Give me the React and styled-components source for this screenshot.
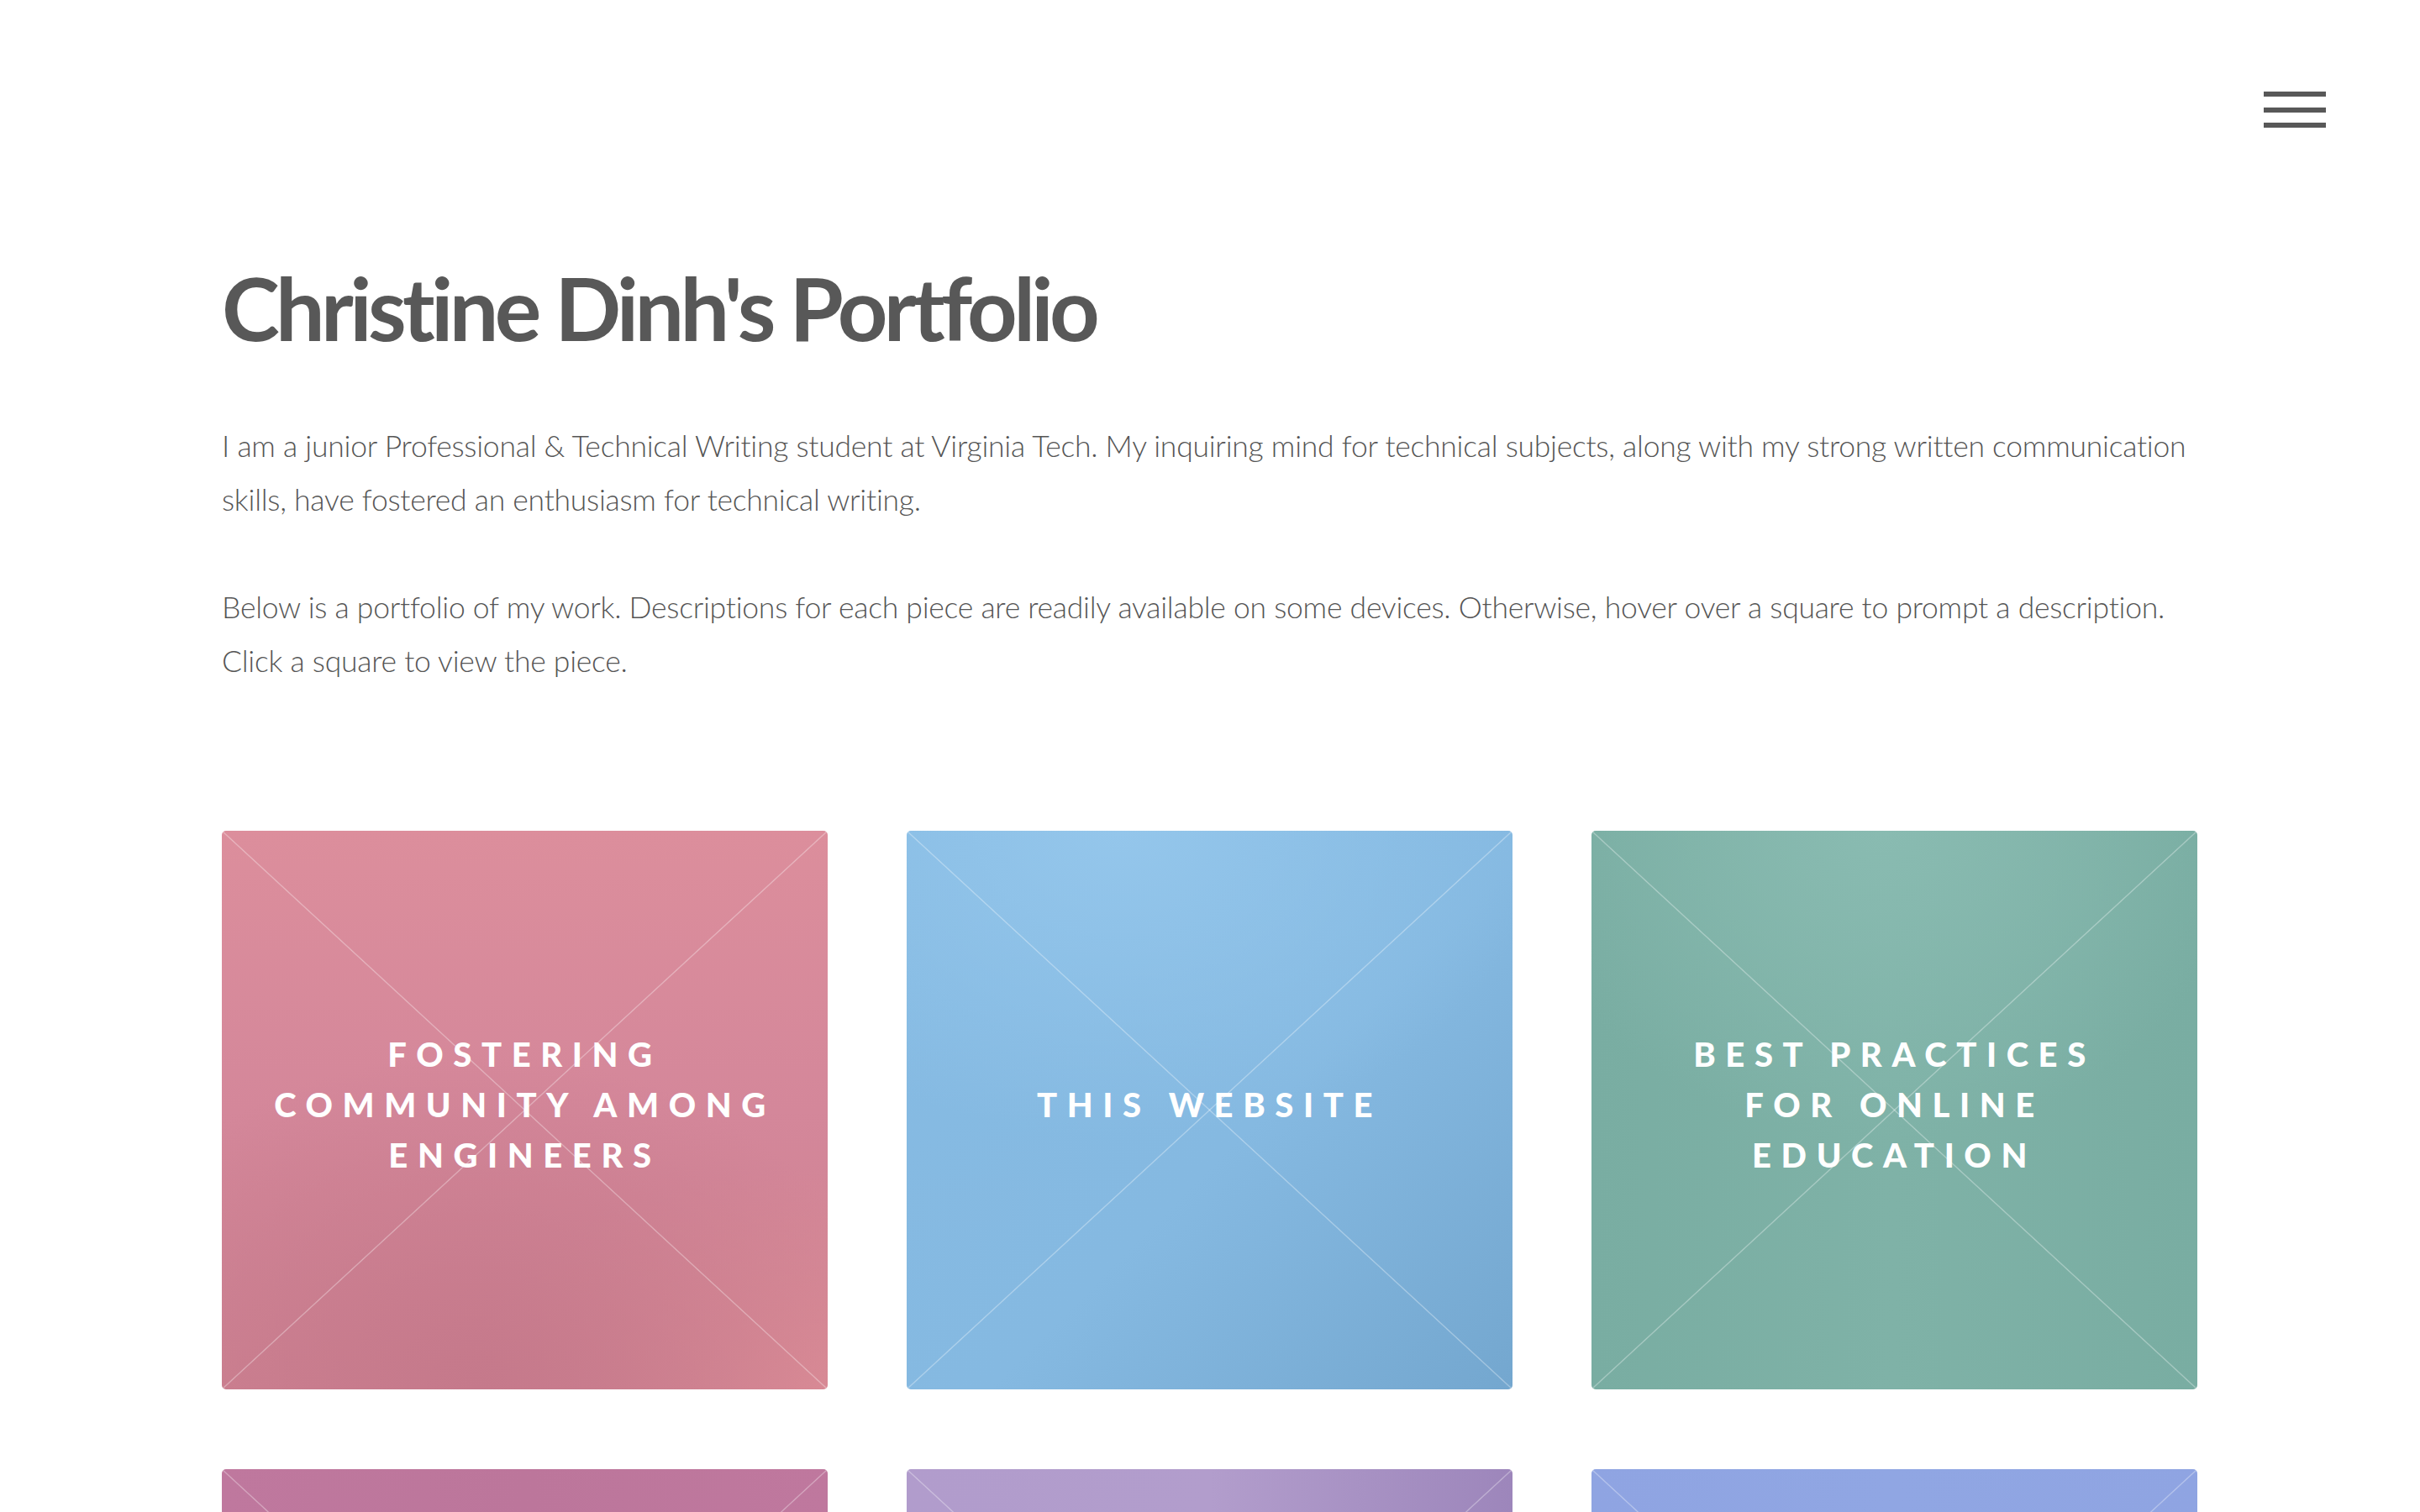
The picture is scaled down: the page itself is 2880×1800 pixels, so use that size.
import styled, { createGlobalStyle } from 'styled-components';

const GlobalStyle = createGlobalStyle`
  html, body {
    margin: 0;
    padding: 0;
    background: #fff;
  }
  body {
    font-family: Lato, "Noto Sans", sans-serif;
    color: #585858;
  }
`;

const Page = styled.div`
  width: 2880px;
  min-height: 1800px;
  overflow: hidden;
`;

const Header = styled.header`
  display: flex;
  justify-content: flex-end;
  padding: 109px 112px 0 0;
  height: 60px;
`;

const MenuButton = styled.button`
  display: flex;
  flex-direction: column;
  gap: 12.5px;
  width: 74px;
  padding: 0;
  border: 0;
  background: none;
  cursor: pointer;
`;

const MenuBar = styled.span`
  display: block;
  height: 6px;
  background: #585858;
`;

const Main = styled.main`
  width: 2351px;
  margin-left: 264px;
  padding-top: 135px;
`;

const Title = styled.h1`
  margin: 0;
  font-family: Lato, "Noto Sans", sans-serif;
  font-weight: 700;
  font-size: 104px;
  line-height: 1.2;
  letter-spacing: -0.045em;
  color: #585858;
`;

const Intro = styled.div`
  margin-top: 70px;
  width: 2351px;
`;

const Paragraph = styled.p`
  margin: 0 0 64px;
  font-family: Lato, "Noto Sans", sans-serif;
  font-weight: 300;
  font-size: 35.5px;
  line-height: 64px;
  letter-spacing: -0.007em;
  color: #555;
`;

const Grid = styled.section`
  display: grid;
  grid-template-columns: repeat(3, 1fr);
  column-gap: 94px;
  row-gap: 95px;
  margin-top: 170px;
`;

const Card = styled.a`
  position: relative;
  display: flex;
  align-items: center;
  justify-content: center;
  height: 665px;
  border-radius: 5px;
  overflow: hidden;
  text-decoration: none;
  background: ${(p) => p.$bg};

  &::after {
    content: '';
    position: absolute;
    inset: 0;
    pointer-events: none;
    background:
      linear-gradient(to top right, transparent calc(50% - 1.2px), rgba(255, 255, 255, 0.38) 50%, transparent calc(50% + 1.2px)),
      linear-gradient(to bottom right, transparent calc(50% - 1.2px), rgba(255, 255, 255, 0.38) 50%, transparent calc(50% + 1.2px));
  }
`;

const CardLabel = styled.span`
  position: relative;
  z-index: 1;
  max-width: 612px;
  padding-bottom: 12px;
  text-align: center;
  font-family: Lato, "Noto Sans", sans-serif;
  font-weight: 900;
  font-size: 40px;
  line-height: 60px;
  letter-spacing: 11.6px;
  text-transform: uppercase;
  color: #fff;
`;

const pieces = [
  {
    title: 'Fostering Community Among Engineers',
    bg: 'radial-gradient(ellipse 70% 60% at 42% 100%, #c5798b 0%, rgba(197,121,139,0) 100%), radial-gradient(ellipse 60% 40% at 100% 100%, #dc8d97 0%, rgba(220,141,151,0) 100%), linear-gradient(180deg, #dc8e9c 0%, #d4879a 50%, #cd8191 100%)',
  },
  {
    title: 'This Website',
    bg: 'radial-gradient(ellipse 70% 55% at 35% 0%, #94c6eb 0%, rgba(148,198,235,0) 100%), linear-gradient(135deg, #86bbe3 0%, #85b9e1 55%, #74a7cf 100%)',
  },
  {
    title: 'Best Practices for Online Education',
    bg: 'radial-gradient(ellipse 60% 55% at 48% 0%, #89bbb1 0%, rgba(137,187,177,0) 100%), linear-gradient(90deg, #79ada2 0%, #7fb2a7 50%, #79ada2 100%)',
  },
  {
    title: '',
    bg: 'linear-gradient(90deg, #bf789e 0%, #bc769b 50%, #bf789e 100%)',
  },
  {
    title: '',
    bg: 'linear-gradient(90deg, #b19ccc 0%, #b29dcc 50%, #9d86bb 100%)',
  },
  {
    title: '',
    bg: 'linear-gradient(90deg, #8fa4e2 0%, #90a6e3 50%, #8fa4e2 100%)',
  },
];

export default function App() {
  return (
    <Page>
      <GlobalStyle />
      <Header>
        <MenuButton aria-label="Menu">
          <MenuBar />
          <MenuBar />
          <MenuBar />
        </MenuButton>
      </Header>
      <Main>
        <Title>Christine Dinh's Portfolio</Title>
        <Intro>
          <Paragraph>
            I am a junior Professional &amp; Technical Writing student at Virginia Tech. My inquiring mind for
            technical subjects, along with my strong written communication skills, have fostered an enthusiasm for
            technical writing.
          </Paragraph>
          <Paragraph>
            Below is a portfolio of my work. Descriptions for each piece are readily available on some devices.
            Otherwise, hover over a square to prompt a description. Click a square to view the piece.
          </Paragraph>
        </Intro>
        <Grid>
          {pieces.map((piece, i) => (
            <Card key={i} href="#" $bg={piece.bg}>
              {piece.title && <CardLabel>{piece.title}</CardLabel>}
            </Card>
          ))}
        </Grid>
      </Main>
    </Page>
  );
}
